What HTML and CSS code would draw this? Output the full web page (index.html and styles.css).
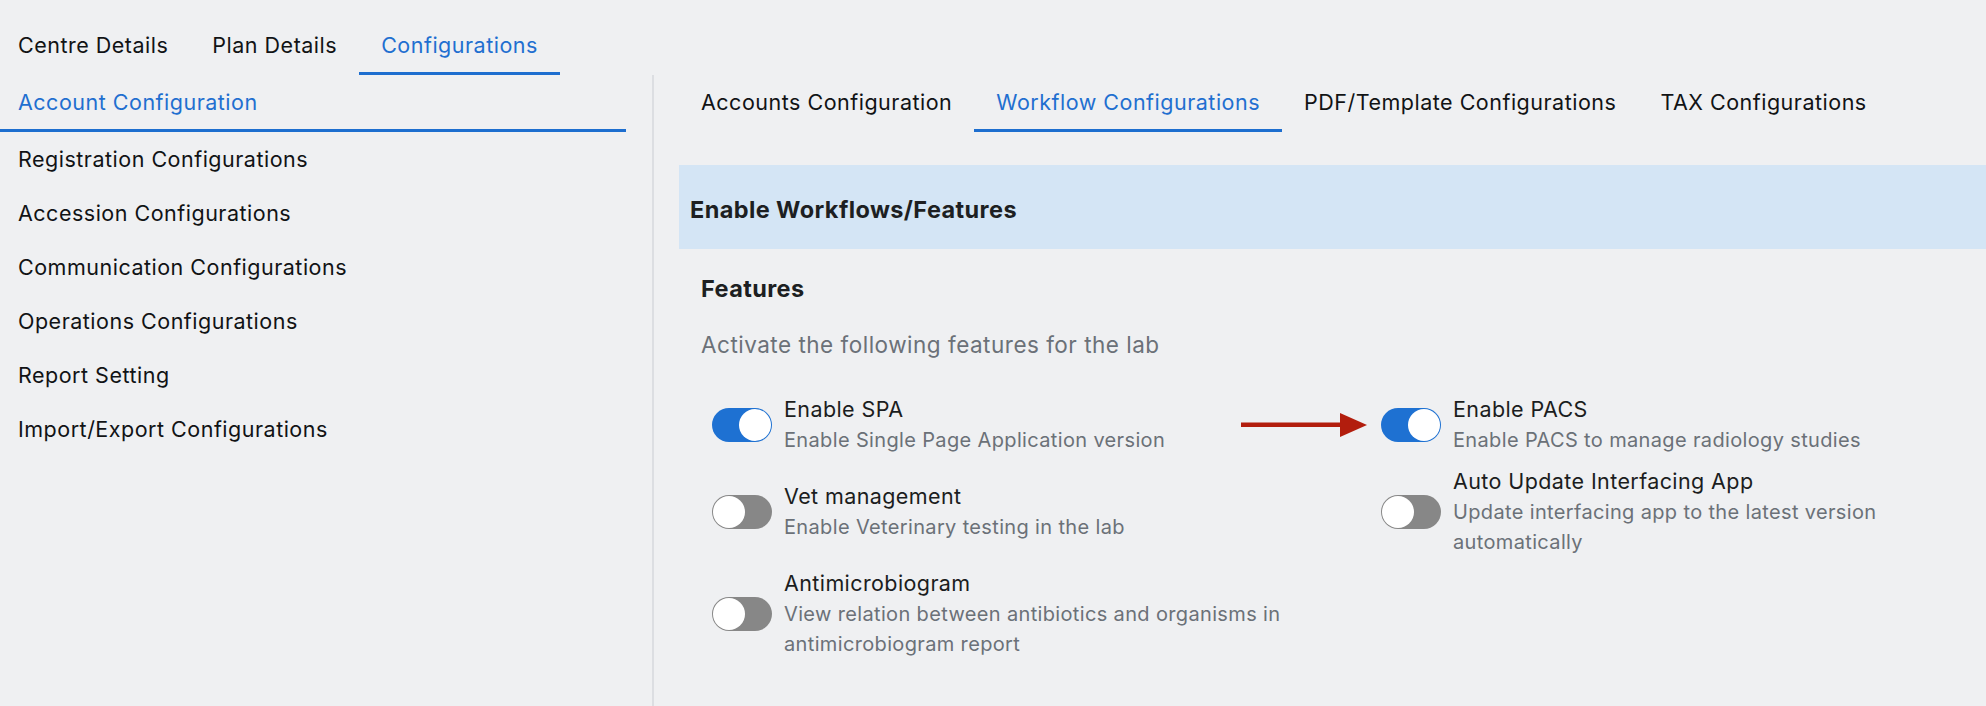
FILE: index.html
```html
<!DOCTYPE html>
<html>
<head>
	<meta charset="utf-8">
	<title>Configurations</title>
	<link rel="stylesheet" href="styles.css">
</head>
<body>
	<ul class="top-tabs">
		<li class="tab">Centre Details</li>
		<li class="tab">Plan Details</li>
		<li class="tab active">Configurations</li>
	</ul>

	<div class="layout">
		<ul class="side-menu">
			<li class="side-item active">Account Configuration</li>
			<li class="side-item">Registration Configurations</li>
			<li class="side-item">Accession Configurations</li>
			<li class="side-item">Communication Configurations</li>
			<li class="side-item">Operations Configurations</li>
			<li class="side-item">Report Setting</li>
			<li class="side-item">Import/Export Configurations</li>
		</ul>

		<div class="content">
			<ul class="sub-tabs">
				<li class="tab">Accounts Configuration</li>
				<li class="tab active">Workflow Configurations</li>
				<li class="tab">PDF/Template Configurations</li>
				<li class="tab">TAX Configurations</li>
			</ul>

			<div class="band">Enable Workflows/Features</div>

			<div class="features">
				<h3>Features</h3>
				<p class="lead">Activate the following features for the lab</p>

				<div class="feature-grid">
					<div class="feature">
						<span class="switch on"><span class="knob"></span></span>
						<div class="feature-text">
							<div class="feature-title">Enable SPA</div>
							<div class="feature-desc">Enable Single Page Application version</div>
						</div>
					</div>
					<div class="feature">
						<span class="switch on"><span class="knob"></span></span>
						<div class="feature-text">
							<div class="feature-title">Enable PACS</div>
							<div class="feature-desc">Enable PACS to manage radiology studies</div>
						</div>
					</div>
					<div class="feature">
						<span class="switch"><span class="knob"></span></span>
						<div class="feature-text">
							<div class="feature-title">Vet management</div>
							<div class="feature-desc">Enable Veterinary testing in the lab</div>
						</div>
					</div>
					<div class="feature">
						<span class="switch"><span class="knob"></span></span>
						<div class="feature-text">
							<div class="feature-title">Auto Update Interfacing App</div>
							<div class="feature-desc">Update interfacing app to the latest version automatically</div>
						</div>
					</div>
					<div class="feature">
						<span class="switch"><span class="knob"></span></span>
						<div class="feature-text">
							<div class="feature-title">Antimicrobiogram</div>
							<div class="feature-desc">View relation between antibiotics and organisms in antimicrobiogram report</div>
						</div>
					</div>
				</div>
			</div>
		</div>
	</div>

	<!-- red pointer next to the PACS switch -->
	<svg class="pointer" width="126" height="26" viewBox="0 0 126 26">
		<rect x="0" y="10.5" width="102" height="4.5" fill="#b21d0d"/>
		<polygon points="99,1 126,13 99,25" fill="#b21d0d"/>
	</svg>
</body>
</html>
```

FILE: styles.css
```css
body
{
	margin: 0;
	background-color: #eff0f2;
	font-family: Inter, "Noto Sans", sans-serif;
	color: #111315;
	position: relative;
	height: 706px;
	overflow: hidden;
}

ul
{
	list-style-type: none;
	margin: 0;
	padding: 0;
}

/* tabs, top row and inside the content */
.top-tabs,
.sub-tabs
{
	display: flex;
}

.top-tabs
{
	padding: 15px 0 0 18px;
}

.tab
{
	font-size: 21.5px;
	letter-spacing: 0.5px;
	line-height: 54px;
	padding: 3px 22px 0;
	border-bottom: 3px solid transparent;
	white-space: nowrap;
}

.sub-tabs .tab
{
	padding-top: 0;
}

.top-tabs .tab:first-child
{
	padding-left: 0;
}

.tab.active
{
	color: #1f6fd0;
	border-bottom-color: #1d6ecf;
}

/* left menu + content */
.layout
{
	display: flex;
	height: 631px;
}

.side-menu
{
	width: 626px;
	padding-right: 26px;
	border-right: 2px solid #dcdee2;
	flex-shrink: 0;
}

.side-item
{
	font-size: 21.5px;
	letter-spacing: 0.5px;
	line-height: 54px;
	padding-left: 18px;
}

.side-item.active
{
	color: #1f6fd0;
	border-bottom: 3px solid #1d6ecf;
}

.content
{
	flex: 1;
	padding-left: 25px;
	min-width: 0;
}

.band
{
	margin-top: 33px;
	height: 78px;
	padding: 6px 0 0 11px;
	line-height: 78px;
	background-color: #d4e5f5;
	font-size: 23.5px;
	letter-spacing: 0.4px;
	font-weight: 700;
	color: #1d1f22;
}

.features
{
	padding-left: 22px;
}

.features h3
{
	margin: 25px 0 0;
	font-size: 23.5px;
	letter-spacing: 0.4px;
	font-weight: 700;
	line-height: 30px;
	color: #1d1f22;
}

.lead
{
	margin: 26px 0 0;
	font-size: 22.5px;
	letter-spacing: 0.5px;
	line-height: 30px;
	color: #6b7178;
}

.feature-grid
{
	display: grid;
	grid-template-columns: 669px 1fr;
	row-gap: 11px;
	align-items: center;
	margin: 34px 0 0 11px;
}

.feature
{
	display: flex;
	align-items: center;
	gap: 12px;
}

.feature-text
{
	max-width: 520px;
}

.feature-title
{
	font-size: 21.5px;
	letter-spacing: 0.4px;
	line-height: 31px;
	color: #1b1d20;
}

.feature-desc
{
	font-size: 20px;
	letter-spacing: 0.35px;
	line-height: 30px;
	color: #6b7178;
}

/* toggle switch */
.switch
{
	display: flex;
	align-items: center;
	width: 58px;
	height: 32px;
	padding: 1px;
	border-radius: 17px;
	background-color: #878787;
	flex-shrink: 0;
}

.switch.on
{
	justify-content: flex-end;
	background-color: #1e71d2;
}

.knob
{
	width: 32px;
	height: 32px;
	border-radius: 50%;
	background-color: #ffffff;
}

.pointer
{
	position: absolute;
	left: 1241px;
	top: 412px;
}
```
